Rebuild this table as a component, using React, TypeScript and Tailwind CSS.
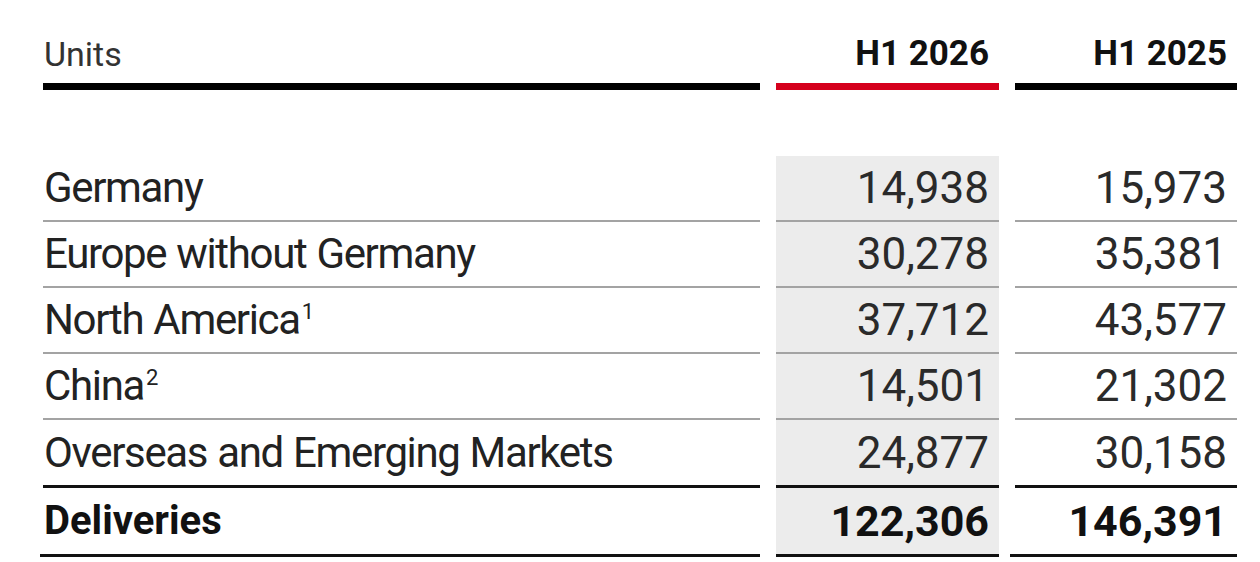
import React from "react";

type Row = { label: string; sup?: string; cur: string; prev: string };

const rows: Row[] = [
  { label: "Germany", cur: "14,938", prev: "15,973" },
  { label: "Europe without Germany", cur: "30,278", prev: "35,381" },
  { label: "North America", sup: "1", cur: "37,712", prev: "43,577" },
  { label: "China", sup: "2", cur: "14,501", prev: "21,302" },
  { label: "Overseas and Emerging Markets", cur: "24,877", prev: "30,158" },
];

export default function App() {
  return (
    <div
      className="w-[1260px] h-[562px] bg-white text-[#222] overflow-hidden"
      style={{ fontFamily: "Roboto, 'Liberation Sans', sans-serif" }}
    >
      <div className="grid grid-cols-[717px_223px_222px] gap-x-4 pl-[43px]">
        {/* header */}
        <div className="h-[90px] flex items-end pb-[12px] border-b-[7px] border-black">
          <span className="text-[34px] leading-none text-[#333] pl-[1px]">Units</span>
        </div>
        <div className="h-[90px] flex items-end justify-end pb-[12px] pr-[10px] border-b-[7px] border-[#d5001c]">
          <span className="text-[35px] leading-none font-bold text-[#111]">H1 2026</span>
        </div>
        <div className="h-[90px] flex items-end justify-end pb-[12px] pr-[10px] border-b-[7px] border-black">
          <span className="text-[35px] leading-none font-bold text-[#111]">H1 2025</span>
        </div>

        {/* spacer */}
        <div className="h-[66px]" />
        <div className="h-[66px]" />
        <div className="h-[66px]" />

        {rows.map((r, i) => {
          const last = i === rows.length - 1;
          const line = last
            ? "h-[68px] border-b-[3px] border-[#111]"
            : "h-[66px] border-b-2 border-[#a3a3a3]";
          return (
            <React.Fragment key={r.label}>
              <div className={`${line} flex items-center`}>
                <span className="text-[42px] leading-none tracking-[-1.35px] [word-spacing:1px] pl-[1px]">
                  {r.label}
                  {r.sup && (
                    <sup className="text-[22px] tracking-normal top-[-15px] ml-[2px]">{r.sup}</sup>
                  )}
                </span>
              </div>
              <div className={`${line} bg-[#ececec] flex items-center justify-end pr-[10px]`}>
                <span className="text-[44px] leading-none text-[#2a2a2a]">{r.cur}</span>
              </div>
              <div className={`${line} flex items-center justify-end pr-[10px]`}>
                <span className="text-[44px] leading-none text-[#2a2a2a]">{r.prev}</span>
              </div>
            </React.Fragment>
          );
        })}

        {/* total */}
        <div className="h-[69px] -ml-[3px] pl-[3px] border-b-[3px] border-[#111] flex items-center">
          <span className="text-[40px] leading-none font-bold text-[#111] pl-[1px]">Deliveries</span>
        </div>
        <div className="h-[69px] bg-[#ececec] border-b-[3px] border-[#111] flex items-center justify-end pr-[10px]">
          <span className="text-[43px] leading-none font-bold text-[#111]">122,306</span>
        </div>
        <div className="h-[69px] -ml-[5px] border-b-[3px] border-[#111] flex items-center justify-end pr-[10px]">
          <span className="text-[43px] leading-none font-bold text-[#111]">146,391</span>
        </div>
      </div>
    </div>
  );
}
